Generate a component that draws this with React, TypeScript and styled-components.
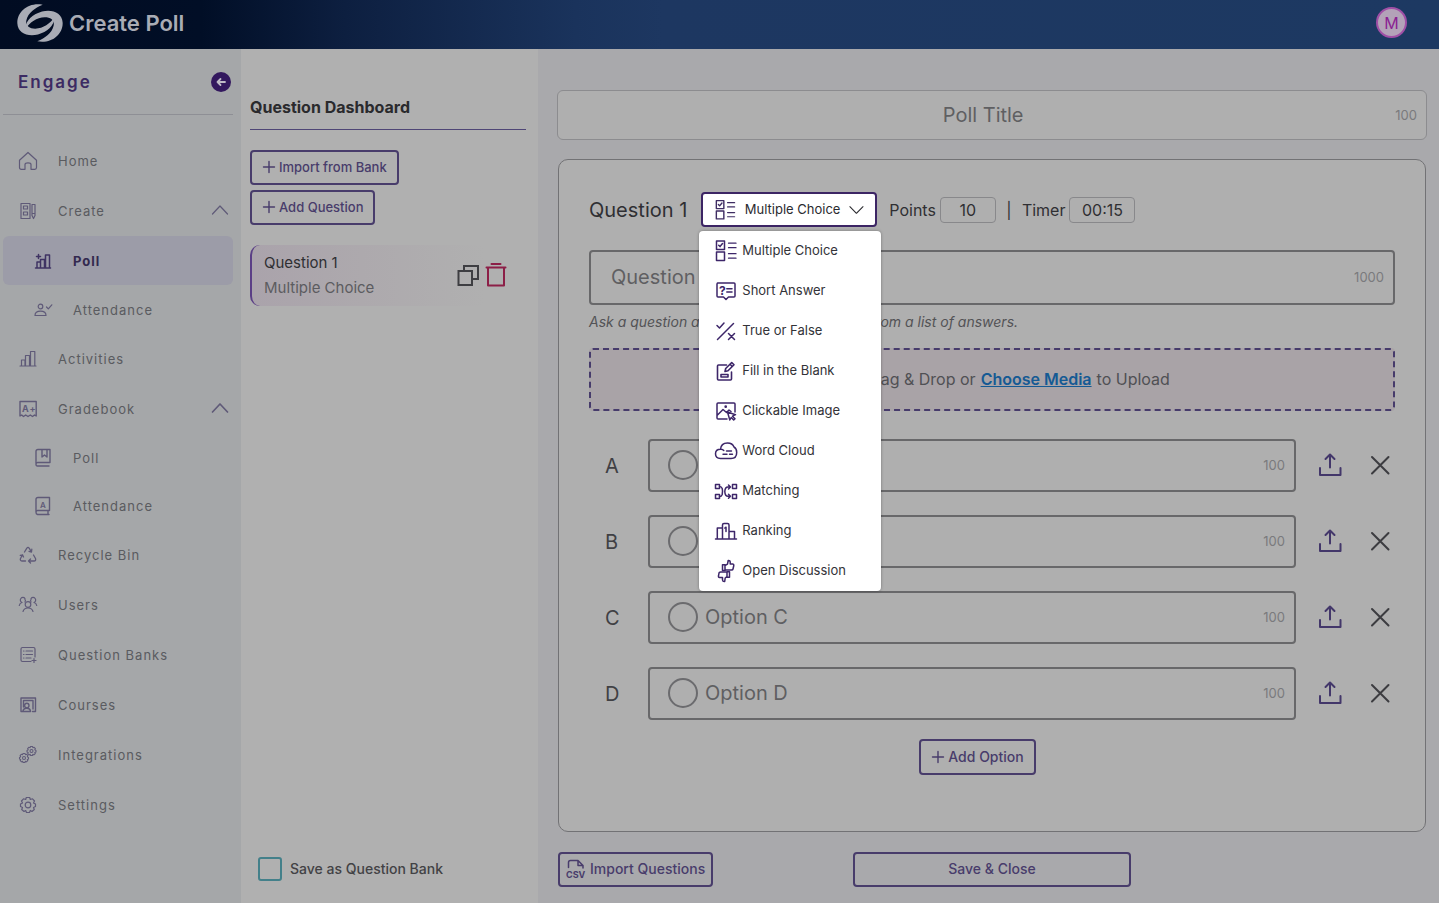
import React, { useState } from "react";
import styled, { createGlobalStyle, css } from "styled-components";

const color = {
  purple: "#3f2d63",
  purpleDim: "#483c6b",
  navIcon: "#5f5a78",
  navText: "#5a5b60",
  ink: "#2f2f33",
  muted: "#5c5c60",
  faint: "#7a7a7d",
  line: "#68686a",
  panel: "#b0b0b0",
  page: "#a9a9ac",
  sidebar: "#a5a7a9",
};

const GlobalStyle = createGlobalStyle`
  *, *::before, *::after { box-sizing: border-box; }
  body {
    margin: 0;
    background: ${color.page};
    color: ${color.ink};
    font-family: Inter, "Liberation Sans", sans-serif;
    font-size: 14px;
  }
  button, input { font: inherit; color: inherit; }
  button { cursor: pointer; padding: 0; }
  ul { list-style: none; margin: 0; padding: 0; }
`;

const Page = styled.div`
  min-height: 100vh;
  display: flex;
  flex-direction: column;
`;

const Header = styled.header`
  height: 49px;
  flex: none;
  display: flex;
  align-items: center;
  gap: 6px;
  padding: 0 32px 4px 17px;
  background: linear-gradient(90deg, #010c22 0%, #010e26 14%, #0d1f40 24%, #1a335c 40%, #1d3761 46%, #1d3962 100%);
`;

const Brand = styled.h1`
  margin: 0;
  flex: 1;
  font-size: 22px;
  line-height: 28px;
  font-weight: 600;
  color: #a9acb5;
`;

const Avatar = styled.button`
  width: 31px;
  height: 31px;
  border: 2px solid #a04fa6;
  border-radius: 50%;
  background: #b3a2b8;
  color: #8a1f92;
  font-size: 16px;
  line-height: 24px;
  font-weight: 400;
`;

const Body = styled.div`
  flex: 1;
  display: flex;
`;

/* Sidebar */

const Sidebar = styled.nav`
  width: 241px;
  flex: none;
  padding: 0 8px 0 3px;
  background: ${color.sidebar};
`;

const SidebarHead = styled.div`
  height: 66px;
  display: flex;
  align-items: center;
  justify-content: space-between;
  padding: 0 2px 0 15px;
  margin-bottom: 21px;
  border-bottom: 1px solid #8e8f95;
`;

const SidebarTitle = styled.h2`
  margin: 0;
  font-size: 17px;
  line-height: 24px;
  font-weight: 600;
  letter-spacing: 2px;
  color: #3c2b63;
`;

const Collapse = styled.button`
  display: flex;
  width: 20px;
  height: 20px;
  border: 0;
  border-radius: 50%;
  align-items: center;
  justify-content: center;
  background: #33185e;
  color: #c0bcc8;
`;

const NavLink = styled.a<{ $h: number; $sub?: boolean; $active?: boolean }>`
  display: flex;
  align-items: center;
  height: ${(p) => p.$h}px;
  padding: 0 4px 0 ${(p) => (p.$sub ? 30 : 15)}px;
  gap: 20px;
  border-radius: 6px;
  color: ${color.navText};
  font-size: 13px;
  line-height: 20px;
  letter-spacing: 1px;
  text-decoration: none;
  > svg { color: ${color.navIcon}; flex: none; }
  > span { flex: 1; }
  ${(p) =>
    p.$active &&
    css`
      background: #9c9ca8;
      color: #33294f;
      font-weight: 700;
      > svg { color: #3f3363; }
    `}
`;

/* Question dashboard */

const Dashboard = styled.aside`
  width: 297px;
  flex: none;
  display: flex;
  flex-direction: column;
  align-items: flex-start;
  padding: 46px 12px 22px 9px;
  background: ${color.panel};
`;

const DashboardTitle = styled.h2`
  align-self: stretch;
  margin: 0 0 20px;
  padding-bottom: 10px;
  border-bottom: 1px solid #4f4676;
  font-size: 16px;
  line-height: 24px;
  font-weight: 700;
  color: #2a2a2d;
`;

const OutlineButton = styled.button<{ $large?: boolean }>`
  display: inline-flex;
  align-items: center;
  justify-content: center;
  gap: ${(p) => (p.$large ? 4 : 3)}px;
  height: 35px;
  padding: 0 ${(p) => (p.$large ? 6 : 10)}px 1px;
  border: 2px solid ${color.purpleDim};
  border-radius: 4px;
  background: transparent;
  color: ${color.purpleDim};
  font-size: ${(p) => (p.$large ? 14 : 13)}px;
  line-height: 20px;
  font-weight: 500;
  white-space: nowrap;
`;

const ButtonStack = styled.div`
  display: flex;
  flex-direction: column;
  align-items: flex-start;
  gap: 5px;
  margin-bottom: 20px;
`;

const QuestionCard = styled.article`
  align-self: stretch;
  display: flex;
  align-items: center;
  gap: 5px;
  height: 61px;
  padding: 0 18px 2px 12px;
  border-left: 2px solid #5b3f86;
  border-radius: 10px 0 0 10px;
  background: linear-gradient(90deg, #aaa3ab 0%, #ada9ad 40%, ${color.panel} 85%);
  font-size: 15px;
  line-height: 25px;
  > div { flex: 1; }
`;

const CardKind = styled.p`
  margin: 0;
  color: ${color.muted};
`;
const CardName = styled.h3`
  margin: 0;
  font-size: 15px;
  font-weight: 400;
  color: ${color.ink};
`;

const IconButton = styled.button<{ $tone: string }>`
  display: flex;
  border: 0;
  background: transparent;
  color: ${(p) => p.$tone};
`;

const SaveLabel = styled.label`
  display: flex;
  align-items: center;
  gap: 8px;
  margin: auto 0 0 8px;
  font-size: 14px;
  line-height: 20px;
  font-weight: 500;
  color: #424245;
`;

const Checkbox = styled.input`
  appearance: none;
  width: 24px;
  height: 24px;
  margin: 0;
  border: 2px solid #43808a;
  border-radius: 3px;
`;

/* Poll editor */

const Main = styled.main`
  flex: 1;
  min-width: 0;
  display: flex;
  flex-direction: column;
  padding: 41px 12px 16px 19px;
  background: ${color.page};
`;

const Field = styled.div<{ $variant: "title" | "question" | "option" }>`
  flex: ${(p) => (p.$variant === "option" ? "1" : "none")};
  display: flex;
  align-items: center;
  gap: 7px;
  background: #afafaf;
  height: ${(p) => ({ title: 50, question: 55, option: 53 })[p.$variant]}px;
  padding: 0 9px 1px ${(p) => (p.$variant === "option" ? 18 : 20)}px;
  border: ${(p) => (p.$variant === "title" ? "1px solid #8c8c8f" : `2px solid ${color.line}`)};
  border-radius: ${(p) => (p.$variant === "title" ? 6 : 4)}px;
`;

const TextInput = styled.input<{ $center?: boolean }>`
  flex: 1;
  min-width: 0;
  padding: 0;
  border: 0;
  outline: 0;
  background: transparent;
  font-size: 20px;
  line-height: 28px;
  text-align: ${(p) => (p.$center ? "center" : "left")};
  &::placeholder { color: #5f5f62; opacity: 1; }
`;

const Count = styled.span`
  flex: none;
  font-size: 13px;
  line-height: 20px;
  color: ${color.faint};
`;

const Editor = styled.section`
  margin: 19px 1px 20px;
  padding: 32px 30px 56px;
  border: 1px solid #727275;
  border-radius: 10px;
  background: #afafaf;
  display: flex;
  flex-direction: column;
`;

const Settings = styled.div`
  display: flex;
  align-items: center;
  height: 35px;
  margin-bottom: 23px;
`;

const QuestionName = styled.h2`
  margin: 0 14px 0 0;
  font-size: 20px;
  line-height: 28px;
  font-weight: 400;
`;

const Picker = styled.div`
  position: relative;
  margin-right: 12px;
`;

const PickerText = styled.span`
  flex: 1;
  padding-bottom: 2px;
  text-align: left;
  white-space: nowrap;
`;

const PickerButton = styled.button`
  display: flex;
  align-items: center;
  gap: 8px;
  width: 176px;
  height: 35px;
  padding: 0 10px 0 11px;
  border: 2px solid #3c2564;
  border-radius: 4px;
  background: #fff;
  color: #2b2b2f;
  font-size: 13px;
  line-height: 20px;
  > svg:first-child { color: ${color.purple}; }
`;

const Menu = styled.ul`
  position: absolute;
  top: 39px;
  left: -2px;
  z-index: 2;
  width: 182px;
  border-radius: 4px;
  background: #fff;
  box-shadow: 0 0 3px rgba(0, 0, 0, 0.35);
`;

const MenuItem = styled.button`
  display: flex;
  align-items: center;
  gap: 4px;
  width: 100%;
  height: 40px;
  padding-left: 15px;
  border: 0;
  background: transparent;
  color: #333338;
  font-size: 13px;
  line-height: 20px;
  > svg { color: #3d2669; }
`;

const SettingLabel = styled.label`
  display: flex;
  align-items: center;
  gap: 4px;
  font-size: 16px;
  line-height: 24px;
`;

const SmallInput = styled.input<{ $w: number }>`
  width: ${(p) => p.$w}px;
  height: 26px;
  padding: 0;
  border: 1px solid #88888b;
  border-radius: 4px;
  background: transparent;
  text-align: center;
`;

const Divider = styled.span`
  width: 26px;
  text-align: center;
  font-size: 16px;
  line-height: 24px;
`;

const Hint = styled.p`
  margin: 7px 0 16px;
  font-size: 14px;
  line-height: 20px;
  font-style: italic;
  color: #535356;
`;

const DropZone = styled.div`
  display: flex;
  align-items: center;
  justify-content: center;
  gap: 5px;
  height: 63px;
  padding-bottom: 2px;
  margin-bottom: 28px;
  border: 2px dashed #463b6b;
  border-radius: 4px;
  background: #a9a3a7;
  font-size: 16px;
  line-height: 24px;
  color: #505054;
  svg { margin-right: 20px; }
  a { color: #155a94; font-weight: 600; }
`;

const Options = styled.ul`
  display: flex;
  flex-direction: column;
  gap: 23px;
`;

const OptionRow = styled.li`
  display: flex;
  align-items: center;
  padding-right: 5px;
`;

const Letter = styled.label`
  width: 59px;
  padding-left: 16px;
  font-size: 20px;
  line-height: 28px;
  color: #404044;
`;

const Radio = styled.input`
  appearance: none;
  flex: none;
  width: 30px;
  height: 30px;
  margin: 0;
  border: 2px solid #6b6b6e;
  border-radius: 50%;
`;

const OptionActions = styled.div`
  display: flex;
  align-items: center;
  gap: 28px;
  margin-left: 22px;
  padding-bottom: 2px;
`;

const AddRow = styled.div`
  display: flex;
  justify-content: center;
  margin-top: 19px;
  padding-right: 29px;
  > button { height: 36px; font-size: 14px; }
`;

const Footer = styled.footer`
  display: grid;
  grid-template-columns: 1fr 32% 1fr;
  margin: 0 1px;
  > :first-child { justify-self: start; }
`;

/* Icons */

type IconProps = { w?: number; h?: number; sw?: number; children: React.ReactNode };

const Icon = ({ w = 18, h, sw = 1.2, children }: IconProps) => (
  <svg
    width={w}
    height={h ?? w}
    viewBox={`0 0 ${w} ${h ?? w}`}
    fill="none"
    stroke="currentColor"
    strokeWidth={sw}
    strokeLinecap="round"
    strokeLinejoin="round"
    aria-hidden="true"
  >
    {children}
  </svg>
);

const glyph = { fill: "currentColor", stroke: "none", fontFamily: "Inter, sans-serif", fontWeight: 700 } as const;

const Logo = () => {
  const half =
    "M76 2C34 -6 0 22 1 57C2 86 32 98 62 90C90 82 112 62 110 40C98 58 78 72 54 73C34 73 24 62 28 47C33 26 52 12 76 2Z";
  return (
    <svg width="46" height="38" viewBox="0 0 136 112" fill="#a9acb5" aria-hidden="true">
      <path d={half} />
      <path d={half} transform="rotate(180 68 56)" />
    </svg>
  );
};

const Plus = () => (
  <Icon w={14} sw={1.4}>
    <path d="M7 1.5v11M1.5 7h11" />
  </Icon>
);

const Chevron = ({ up, dark }: { up?: boolean; dark?: boolean }) => (
  <Icon w={18} sw={dark ? 1.7 : 1.2}>
    <path d={up ? "M1.500 12L9 4L16.500 12" : "M2 5.500L9 12.500L16 5.500"} />
  </Icon>
);

const gear =
  "M8.300 2.500H11.700L12.300 4.500L14.500 3.800L16.500 6L15.500 8L17.500 9V11.500L15.500 12.500L16.300 14.500L14 16.500L12.300 15.500L11.500 17.500H8.500L7.700 15.500L6 16.500L3.700 14.500L4.500 12.500L2.500 11.500V9L4.500 8L3.500 6L5.500 3.800L7.700 4.500Z";

const SmallGear = ({ at }: { at: string }) => (
  <g transform={`translate(${at}) scale(.6)`} strokeWidth="1.800">
    <path d={gear} />
    <circle cx="10" cy="10" r="2.500" />
  </g>
);

const navIcons: Record<string, React.ReactNode> = {
  home: (
    <Icon w={20}>
      <path d="M1.500 9.200L10 1.500L18.500 9.200V16.500Q18.500 18.300 16.700 18.300H13V13.500Q13 11.800 10 11.800T7 13.500V18.300H3.300Q1.500 18.300 1.500 16.500Z" />
    </Icon>
  ),
  create: (
    <Icon w={20}>
      <path d="M3 2.500H12V17.500H3ZM5.500 5H9.500V8H5.500ZM5.500 11H9.500V14H5.500ZM14 3.500H17V14.500L15.500 17.500L14 14.500ZM14 12.500H17" />
    </Icon>
  ),
  poll: (
    <Icon w={20} sw={1.5}>
      <path d="M2.500 17H17.500M4 17V11H7.500V17M7.500 17V8.500H11.500V17M12.500 17V4H16.500V17M5.500 3.500V7.500M3.500 5.500H7.500" />
    </Icon>
  ),
  attendance: (
    <Icon w={20}>
      <circle cx="7.500" cy="6.500" r="2.300" />
      <path d="M2 15.500Q2 11.200 7.500 11.200T13 15.500ZM13.500 7L15.300 8.800L18.800 4.800" />
    </Icon>
  ),
  activities: (
    <Icon w={20}>
      <path d="M2 17H18M3.500 17V11H7V17M7.500 17V6.500H11.500V17M12.500 17V2.500H16.800V17" />
    </Icon>
  ),
  gradebook: (
    <Icon w={20} sw={1.4}>
      <path d="M2 2.500H18.200V17L16.500 16L14.500 17.500L12.300 16L10 17.500L7.700 16L5.500 17.500L3.700 16L2 17Z" />
      <text x="4" y="13" fontSize="9" {...glyph}>A+</text>
    </Icon>
  ),
  book: (
    <Icon w={20} sw={1.4}>
      <path d="M3 15.500V3.500Q3 1.500 5 1.500H17V14.500H4.500Q3 14.500 3 16.300T4.500 18H16M9 1.500V9L11.500 7L14 9V1.500" />
    </Icon>
  ),
  bookA: (
    <Icon w={20} sw={1.4}>
      <path d="M3 16V3.500Q3 1.500 5 1.500H16.500V14.500H4.500Q3 14.500 3 16.300T4.500 18.500H16M15 14.500V18.500" />
      <text x="7" y="11.500" fontSize="8" {...glyph} fontWeight={600}>A</text>
    </Icon>
  ),
  recycle: (
    <Icon w={20} sw={1.3}>
      <path d="M6.500 7L8.700 3.300Q10 1.500 11.300 3.300L13.500 7M13.800 4.200L13.500 7L11 6.300M15.500 10L17.500 13.500Q18.200 16 16 16H10.500M12.500 14L10.500 16L12.500 18M7.500 16H4Q1.700 15.800 2.500 13.500L4.500 9.800M2.300 10.300L4.500 9.800L5.500 12" />
    </Icon>
  ),
  users: (
    <Icon w={20}>
      <circle cx="10" cy="9.500" r="2.800" />
      <path d="M5 16.500Q6 13 10 13T15 16.500M7 3.500A2.600 2.600 0 1 0 4 7.500Q1.700 8 1.300 10.500M6.800 4Q8 5.500 7 7M13 3.500A2.600 2.600 0 1 1 16 7.500Q18.300 8 18.700 10.500M13.200 4Q12 5.500 13 7" />
    </Icon>
  ),
  banks: (
    <Icon w={20}>
      <path d="M13 16.500H4.500Q3 16.500 3 15V4Q3 2.500 4.500 2.500H15.500Q17 2.500 17 4V12M5.500 6H6M8 6H14.500M5.500 9.500H6M8 9.500H14.500M5.500 13H6M8 13H13M16 13.500V17.500M14 15.500H18" />
    </Icon>
  ),
  courses: (
    <Icon w={20} sw={1.4}>
      <path d="M5 16.500H3V3H17.500V16.500H14.500M5.500 12V5.500H15V14M5 16.500Q5 13.300 8.700 13.300T12.500 16.500Z" />
      <circle cx="8.800" cy="10.500" r="2.200" />
    </Icon>
  ),
  integrations: (
    <Icon w={20}>
      <SmallGear at="0 7" />
      <SmallGear at="7.500 0" />
    </Icon>
  ),
  settings: (
    <Icon w={20}>
      <path d={gear} />
      <circle cx="10" cy="10" r="2.800" />
    </Icon>
  ),
};

const ChoiceIcon = () => (
  <Icon w={24} sw={1.5}>
    <path d="M2.500 2H10.500V10.500H2.500ZM2.500 13H10.500V21.500H2.500ZM4.700 6.200L6 7.600L8.500 4.600" />
    <path d="M14.500 4.200H22M14.500 8.700H22M14.500 14.700H22M14.500 19.200H22" strokeWidth="1.300" />
  </Icon>
);

const kinds: { name: string; icon: React.ReactNode }[] = [
  { name: "Multiple Choice", icon: <ChoiceIcon /> },
  {
    name: "Short Answer",
    icon: (
      <Icon w={24} sw={1.5}>
        <path d="M3.500 4H20Q21 4 21 5V17Q21 18 20 18H14.500L12 20.500L9.500 18H4Q3 18 3 17V5Q3 4 4 4ZM12.800 9.700H18M12.800 13H18" />
        <text x="5" y="15.500" fontSize="12" {...glyph}>?</text>
      </Icon>
    ),
  },
  {
    name: "True or False",
    icon: (
      <Icon w={24} sw={1.5}>
        <path d="M3 6.500L5.500 9L10 4M3.500 20.500L19.500 4.500M14.500 14.500L20.500 20.500M20.500 14.500L14.500 20.500" />
      </Icon>
    ),
  },
  {
    name: "Fill in the Blank",
    icon: (
      <Icon w={24} sw={1.6}>
        <path d="M12.500 6H4.500Q3.500 6 3.500 7V20Q3.500 21 4.500 21H16.500Q17.500 21 17.500 20V13M7 15.500H14V18H7ZM11 12.500L11.700 9.500L17.700 3.500L20 5.800L14 11.800ZM16 5.200L18.300 7.500" />
      </Icon>
    ),
  },
  {
    name: "Clickable Image",
    icon: (
      <Icon w={24} sw={1.5}>
        <path d="M13 20H4Q3 20 3 19V5Q3 4 4 4H20Q21 4 21 5V13M3.500 16L9 10.500L12.500 13.500L15 11L17 12.500" />
        <circle cx="11.700" cy="7.700" r=".6" fill="currentColor" />
        <path d="M13.500 13L21.500 15.700L18.500 17.200L21 19.700L19.700 21L17.200 18.500L15.800 21Z" />
      </Icon>
    ),
  },
  {
    name: "Word Cloud",
    icon: (
      <Icon w={24} sw={1.5}>
        <path d="M6.500 19.500Q1.500 19.300 1.500 14.800T6.500 10.300Q7 4 13.500 4Q18.500 4 20 8Q22.700 9.500 22.700 13.500Q22.700 19.500 17 19.500ZM6.500 10.300Q8.500 10 9.800 11.500" />
        <path d="M12.500 12H17.500M9 15.200H13M15.500 15.200H18.500" strokeWidth="1.400" />
      </Icon>
    ),
  },
  {
    name: "Matching",
    icon: (
      <Icon w={24} sw={1.5}>
        <path d="M1.500 5.500H5.500V9.500H1.500ZM1.500 15.500H5.500V19.500H1.500ZM18.500 5.500H22.500V9.500H18.500ZM18.500 15.500H22.500V19.500H18.500Z" />
        <path d="M5.500 7.500Q7.500 7.500 8.200 9.500T8.200 15.500Q7.500 17.500 5.500 17.500M16.500 8H14Q11 8 10.800 12.500Q11 17.300 14 17.300H16.500M14.500 6L16.500 8L14.500 10M14.500 15.300L16.500 17.300L14.500 19.300" />
      </Icon>
    ),
  },
  {
    name: "Ranking",
    icon: (
      <Icon w={24} sw={1.5}>
        <path d="M1.500 20H22.500M3.300 20V9H8.500M8.500 20V6Q8.500 4.500 10 4.500H13.500Q15 4.500 15 6V20M15 12.500H20.500V20M10.800 9L12 8.200V12.500" />
      </Icon>
    ),
  },
  {
    name: "Open Discussion",
    icon: (
      <Icon w={24} sw={1.5}>
        <path d="M8.500 5.700H11V11.500H8.500ZM11 6.500L13.500 5.200L14.200 1.500Q16.200 1.300 16.200 3.300V5H18.800Q20 5.200 19.800 6.500L19 10Q18.800 11 17.500 11H11" />
        <path d="M15.500 18.300H13V12.800H15.500ZM13 17.500L11.200 19L10.700 22.500Q8.700 22.700 8.500 21V18.500H5.500Q4.200 18.300 4.500 17L5 14Q5.200 13 6.500 13H13" />
      </Icon>
    ),
  },
];

const CopyIcon = () => (
  <Icon w={24} sw={2}>
    <path d="M3.500 8H17V22H3.500ZM9 8V3H23V16H17" strokeLinejoin="miter" />
  </Icon>
);

const TrashIcon = () => (
  <Icon w={24} h={26} sw={2}>
    <path d="M2.500 5.500H21.500M7.500 2H16.500M4 5.500V23.500H20V5.500" />
  </Icon>
);

const UploadIcon = () => (
  <Icon w={24} sw={2}>
    <path d="M12 14.500V2M7.500 6L12 1.500L16.500 6M2 15V22H22.500V15" />
  </Icon>
);

const CloseIcon = () => (
  <Icon w={20} sw={2}>
    <path d="M2 2L18.500 18.500M18.500 2L2 18.500" />
  </Icon>
);

const CsvIcon = () => (
  <Icon w={20} sw={1.5}>
    <path d="M2.500 8.500V3.500Q2.500 1.500 4.500 1.500H12L17 6.500V9M12 1.500V6.500H17" />
    <text x="0" y="18.500" fontSize="9" {...glyph}>CSV</text>
  </Icon>
);

type NavEntry = { label: string; icon: string; h?: number; sub?: boolean; active?: boolean; open?: "light" | "dark" };

const nav: NavEntry[] = [
  { label: "Home", icon: "home" },
  { label: "Create", icon: "create", open: "light" },
  { label: "Poll", icon: "poll", sub: true, active: true, h: 49 },
  { label: "Attendance", icon: "attendance", sub: true, h: 49 },
  { label: "Activities", icon: "activities" },
  { label: "Gradebook", icon: "gradebook", open: "dark" },
  { label: "Poll", icon: "book", sub: true, h: 48 },
  { label: "Attendance", icon: "bookA", sub: true, h: 48 },
  { label: "Recycle Bin", icon: "recycle" },
  { label: "Users", icon: "users" },
  { label: "Question Banks", icon: "banks" },
  { label: "Courses", icon: "courses" },
  { label: "Integrations", icon: "integrations" },
  { label: "Settings", icon: "settings" },
];

export default function App() {
  const [open, setOpen] = useState(true);
  const [kind, setKind] = useState("Multiple Choice");

  return (
    <Page>
      <GlobalStyle />
      <Header>
        <Logo />
        <Brand>Create Poll</Brand>
        <Avatar aria-label="Account">M</Avatar>
      </Header>
      <Body>
        <Sidebar>
          <SidebarHead>
            <SidebarTitle>Engage</SidebarTitle>
            <Collapse aria-label="Collapse menu">
              <Icon w={12} sw={1.8}>
                <path d="M10 6H2.500M5.500 3L2.500 6L5.500 9" />
              </Icon>
            </Collapse>
          </SidebarHead>
          <ul>
            {nav.map((n, i) => (
              <li key={i}>
                <NavLink href="#" $h={n.h ?? 50} $sub={n.sub} $active={n.active}>
                  {navIcons[n.icon]}
                  <span>{n.label}</span>
                  {n.open && <Chevron up dark={n.open === "dark"} />}
                </NavLink>
              </li>
            ))}
          </ul>
        </Sidebar>

        <Dashboard>
          <DashboardTitle>Question Dashboard</DashboardTitle>
          <ButtonStack>
            <OutlineButton><Plus />Import from Bank</OutlineButton>
            <OutlineButton><Plus />Add Question</OutlineButton>
          </ButtonStack>
          <QuestionCard>
            <div>
              <CardName>Question 1</CardName>
              <CardKind>{kind}</CardKind>
            </div>
            <IconButton $tone="#3e3e42" aria-label="Duplicate question"><CopyIcon /></IconButton>
            <IconButton $tone="#8c1f47" aria-label="Delete question"><TrashIcon /></IconButton>
          </QuestionCard>
          <SaveLabel>
            <Checkbox type="checkbox" />
            Save as Question Bank
          </SaveLabel>
        </Dashboard>

        <Main>
          <Field $variant="title">
            <TextInput $center placeholder="Poll Title" aria-label="Poll title" />
            <Count>100</Count>
          </Field>
          <Editor>
            <Settings>
              <QuestionName>Question 1</QuestionName>
              <Picker>
                <PickerButton aria-haspopup="true" aria-expanded={open} onClick={() => setOpen(!open)}>
                  <ChoiceIcon />
                  <PickerText>{kind}</PickerText>
                  <Chevron />
                </PickerButton>
                {open && (
                  <Menu>
                    {kinds.map((k) => (
                      <li key={k.name}>
                        <MenuItem onClick={() => { setKind(k.name); setOpen(false); }}>
                          {k.icon}
                          <PickerText>{k.name}</PickerText>
                        </MenuItem>
                      </li>
                    ))}
                  </Menu>
                )}
              </Picker>
              <SettingLabel>Points<SmallInput $w={56} defaultValue="10" /></SettingLabel>
              <Divider>|</Divider>
              <SettingLabel>Timer<SmallInput $w={66} defaultValue="00:15" /></SettingLabel>
            </Settings>
            <Field $variant="question">
              <TextInput placeholder="Question" aria-label="Question text" />
              <Count>1000</Count>
            </Field>
            <Hint>Ask a question and have students choose from a list of answers.</Hint>
            <DropZone>
              <UploadIcon />
              <span>Drag &amp; Drop or</span>
              <a href="#">Choose Media</a>
              <span>to Upload</span>
            </DropZone>
            <Options>
              {["A", "B", "C", "D"].map((l) => (
                <OptionRow key={l}>
                  <Letter htmlFor={`option-${l}`}>{l}</Letter>
                  <Field $variant="option">
                    <Radio type="radio" name="answer" aria-label={`Mark ${l} correct`} />
                    <TextInput id={`option-${l}`} placeholder={`Option ${l}`} />
                    <Count>100</Count>
                  </Field>
                  <OptionActions>
                    <IconButton $tone="#43376a" aria-label={`Upload media for ${l}`}><UploadIcon /></IconButton>
                    <IconButton $tone="#3c3c40" aria-label={`Remove ${l}`}><CloseIcon /></IconButton>
                  </OptionActions>
                </OptionRow>
              ))}
            </Options>
            <AddRow>
              <OutlineButton><Plus />Add Option</OutlineButton>
            </AddRow>
          </Editor>
          <Footer>
            <OutlineButton $large><CsvIcon />Import Questions</OutlineButton>
            <OutlineButton $large>Save &amp; Close</OutlineButton>
          </Footer>
        </Main>
      </Body>
    </Page>
  );
}
